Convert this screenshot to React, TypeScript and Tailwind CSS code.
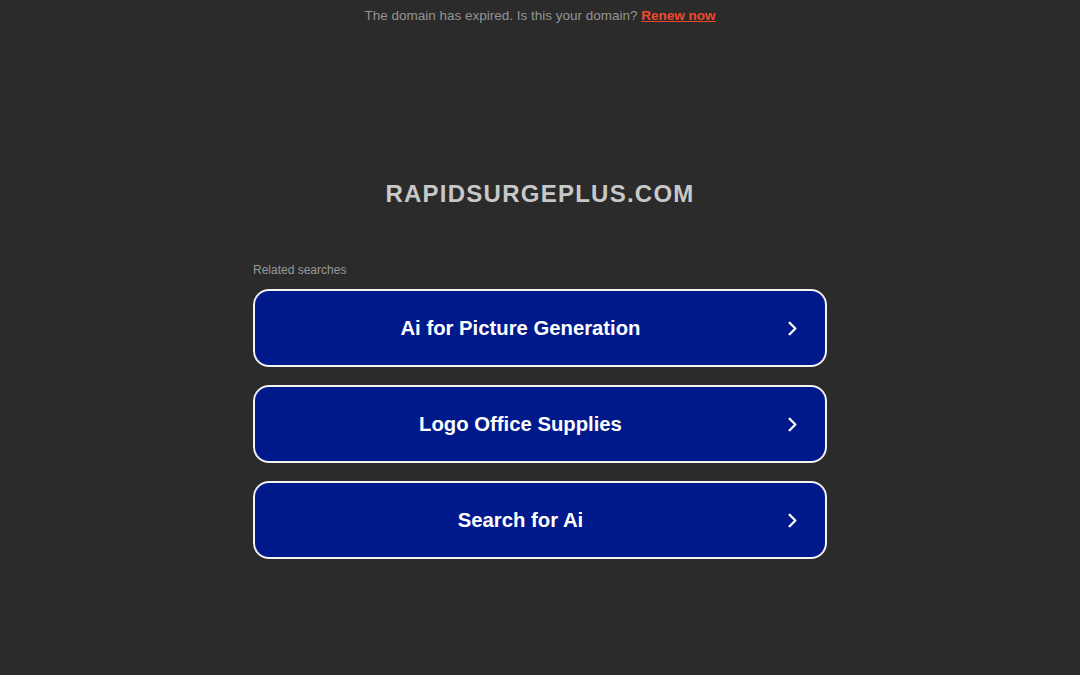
import { FiChevronRight } from 'react-icons/fi';

const SEARCHES = ['Ai for Picture Generation', 'Logo Office Supplies', 'Search for Ai'];

export default function App() {
  return (
    <div className="min-h-[675px] w-full bg-[#2b2b2b] font-['Liberation_Sans',Arial,sans-serif]">
      {/* expired banner */}
      <p className="pt-[8px] text-center text-[13.5px] leading-[16px] text-[#949494]">
        The domain has expired. Is this your domain?{' '}
        <a href="#" className="font-bold text-[#f0482c] underline">
          Renew now
        </a>
      </p>

      <h1 className="mt-[156px] text-center text-[24px] font-bold leading-[28px] tracking-[1.25px] text-[#c8c8c8]">
        RAPIDSURGEPLUS.COM
      </h1>

      <div className="mx-auto mt-[55px] w-[574px]">
        <p className="text-[12px] leading-[14px] text-[#999999]">Related searches</p>
        <div className="mt-[12px] flex flex-col gap-[18px]">
          {SEARCHES.map((label) => (
            <a
              key={label}
              href="#"
              className="flex h-[78px] items-center rounded-[16px] border-2 border-[#f2f2f2] bg-[#001a8c] pl-[24px] pr-[21px]"
            >
              <span className="flex-1 text-center text-[20.3px] font-bold text-white">{label}</span>
              <span className="flex w-[42px] justify-end text-white">
                <FiChevronRight size={23} strokeWidth={2.4} />
              </span>
            </a>
          ))}
        </div>
      </div>
    </div>
  );
}
